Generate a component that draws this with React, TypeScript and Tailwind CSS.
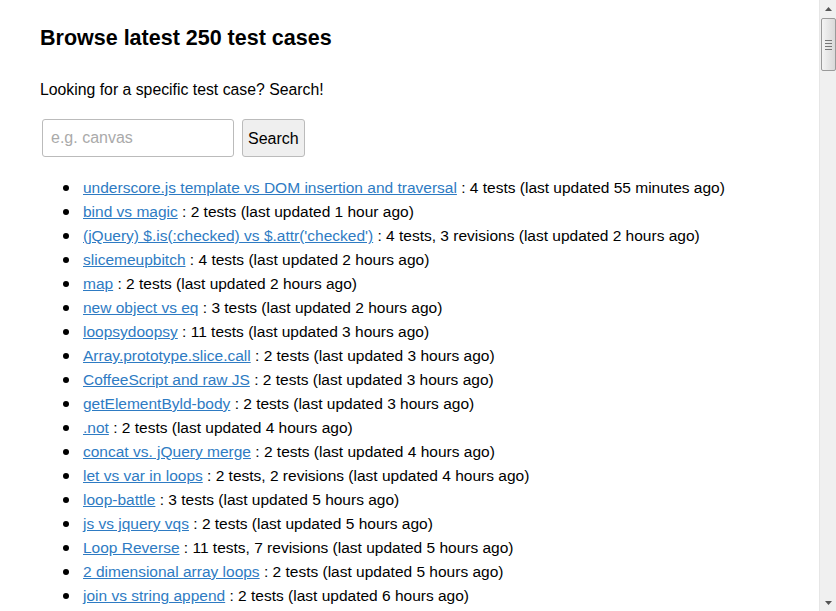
const ITEMS: [string, string][] = [
  ['underscore.js template vs DOM insertion and traversal', '4 tests (last updated 55 minutes ago)'],
  ['bind vs magic', '2 tests (last updated 1 hour ago)'],
  ["(jQuery) $.is(:checked) vs $.attr('checked')", '4 tests, 3 revisions (last updated 2 hours ago)'],
  ['slicemeupbitch', '4 tests (last updated 2 hours ago)'],
  ['map', '2 tests (last updated 2 hours ago)'],
  ['new object vs eq', '3 tests (last updated 2 hours ago)'],
  ['loopsydoopsy', '11 tests (last updated 3 hours ago)'],
  ['Array.prototype.slice.call', '2 tests (last updated 3 hours ago)'],
  ['CoffeeScript and raw JS', '2 tests (last updated 3 hours ago)'],
  ['getElementByld-body', '2 tests (last updated 3 hours ago)'],
  ['.not', '2 tests (last updated 4 hours ago)'],
  ['concat vs. jQuery merge', '2 tests (last updated 4 hours ago)'],
  ['let vs var in loops', '2 tests, 2 revisions (last updated 4 hours ago)'],
  ['loop-battle', '3 tests (last updated 5 hours ago)'],
  ['js vs jquery vqs', '2 tests (last updated 5 hours ago)'],
  ['Loop Reverse', '11 tests, 7 revisions (last updated 5 hours ago)'],
  ['2 dimensional array loops', '2 tests (last updated 5 hours ago)'],
  ['join vs string append', '2 tests (last updated 6 hours ago)'],
]

function Scrollbar() {
  return (
    <div className="w-[17px] shrink-0 bg-[#f0f0f0] border-l border-[#e6e6e6] flex flex-col items-center">
      <div className="h-[17px] w-full flex items-center justify-center">
        <svg width="7" height="4" viewBox="0 0 7 4"><path d="M3.5 0 L7 4 L0 4 Z" fill="#555" /></svg>
      </div>
      <div className="w-[15px] h-[53px] mt-px rounded-[2px] border border-[#9a9a9a] bg-gradient-to-r from-[#f4f4f4] to-[#d9d9d9] flex flex-col items-center justify-center gap-[2px]">
        <div className="w-[7px] h-px bg-[#777]" />
        <div className="w-[7px] h-px bg-[#777]" />
        <div className="w-[7px] h-px bg-[#777]" />
        <div className="w-[7px] h-px bg-[#777]" />
      </div>
      <div className="flex-1" />
      <div className="h-[17px] w-full flex items-center justify-center">
        <svg width="7" height="4" viewBox="0 0 7 4"><path d="M0 0 L7 0 L3.5 4 Z" fill="#555" /></svg>
      </div>
    </div>
  )
}

export default function App() {
  return (
    <div className="flex h-[611px] overflow-hidden bg-white text-black font-['Liberation_Sans',Arial,sans-serif]">
      <div className="flex-1 pl-10 pt-[26px] overflow-hidden">
        <h1 className="text-[21.5px] leading-6 font-bold">Browse latest 250 test cases</h1>
        <p className="mt-[28px] text-[15.8px] leading-6">Looking for a specific test case? Search!</p>
        <form className="mt-[17px] flex items-center gap-2 pl-[2px]" onSubmit={e => e.preventDefault()}>
          <input
            className="w-[192px] h-[38px] px-2 text-base border border-[#bbb] rounded-[3px] placeholder:text-[#aaa] outline-none"
            placeholder="e.g. canvas"
          />
          <button className="h-[38px] px-[5px] pt-px text-base bg-[#efefef] border border-[#bbb] rounded-[3px]">Search</button>
        </form>
        <ul className="mt-[19px] text-[15.5px] leading-6">
          {ITEMS.map(([name, info]) => (
            <li key={name} className="flex items-center whitespace-nowrap">
              <span className="ml-[23px] mr-[14px] w-[6px] h-[6px] rounded-full bg-black shrink-0" />
              <span>
                <a href="#" className="text-[#2e7bc3] underline">{name}</a> : {info}
              </span>
            </li>
          ))}
        </ul>
      </div>
      <Scrollbar />
    </div>
  )
}
